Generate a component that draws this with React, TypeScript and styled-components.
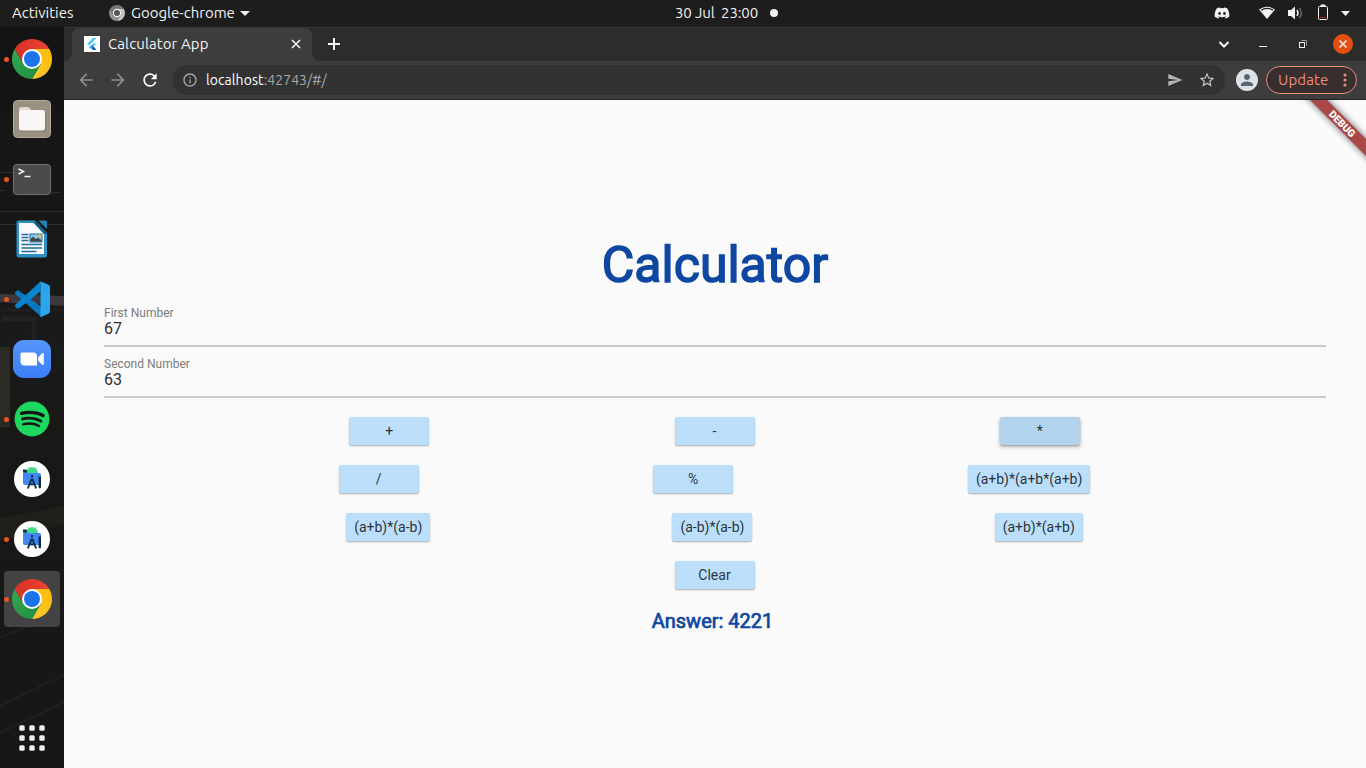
import React from "react";
import styled, { createGlobalStyle, css } from "styled-components";
import { FaDiscord, FaSpotify } from "react-icons/fa";
import { MdArrowBack, MdArrowForward, MdRefresh, MdInfoOutline, MdSend, MdStarBorder, MdPerson } from "react-icons/md";

const GlobalStyle = createGlobalStyle`
  * { box-sizing: border-box; }
  body { margin: 0; overflow: hidden; background: #161616; }
`;

const uiFont = `Ubuntu, "Noto Sans", "Open Sans", sans-serif`;
const appFont = `Roboto, "Liberation Sans", sans-serif`;

const Desktop = styled.div`
  width: 1366px;
  height: 768px;
  display: flex;
  flex-direction: column;
  font-family: ${uiFont};
`;

const TopBar = styled.header`
  height: 27px;
  flex: none;
  display: grid;
  grid-template-columns: 1fr auto 1fr;
  align-items: center;
  padding-bottom: 1px;
  background: #1d1d1d;
  color: #f2f2f2;
  font-size: 15px;
  line-height: 26px;
  white-space: pre;
`;

const BarLeft = styled.div`
  display: flex;
  align-items: center;
  padding-left: 12px;
`;

const Activities = styled.span`
  width: 97px;
`;

const AppMenu = styled.span`
  display: flex;
  align-items: center;
  gap: 6px;
`;

const Caret = styled.i`
  border: 5px solid transparent;
  border-top-color: #f2f2f2;
  border-bottom: 0;
  margin-left: -1px;
`;

const Clock = styled.div`
  display: flex;
  align-items: center;
  gap: 12px;
  padding-left: 87px;
  letter-spacing: -0.12px;
`;

const NoticeDot = styled.i`
  width: 8px;
  height: 8px;
  border-radius: 50%;
  background: #f2f2f2;
`;

const Tray = styled.div`
  display: flex;
  align-items: center;
  justify-content: flex-end;
  padding-right: 16px;
`;

const Workspace = styled.div`
  flex: 1;
  display: flex;
  min-height: 0;
`;

const Dock = styled.nav`
  position: relative;
  width: 64px;
  flex: none;
  display: flex;
  flex-direction: column;
  align-items: center;
  gap: 4px;
  padding: 4px 0;
  background: #151515;
`;

const Wallpaper = styled.svg`
  position: absolute;
  inset: 0;
`;

const DockItem = styled.div<{ $active?: boolean; $last?: boolean }>`
  position: relative;
  width: 56px;
  height: 56px;
  flex: none;
  display: flex;
  align-items: center;
  justify-content: center;
  border-radius: 4px;
  background: ${(p) => (p.$active ? "#434343" : "transparent")};
  ${(p) => p.$last && css`margin-top: auto; margin-bottom: -2px;`}
`;

const RunningDot = styled.i`
  position: absolute;
  left: 0;
  top: 25.500px;
  width: 5px;
  height: 5px;
  border-radius: 50%;
  background: #e95420;
`;

const Browser = styled.main`
  flex: 1;
  display: flex;
  flex-direction: column;
  min-width: 0;
`;

const TabStrip = styled.div`
  height: 34px;
  display: flex;
  align-items: stretch;
  padding-left: 8px;
  background: #2c2c2c;
  border-top: 1px solid #393939;
`;

const Tab = styled.div`
  position: relative;
  width: 240px;
  display: flex;
  align-items: center;
  padding: 0 10px 2px 12px;
  gap: 8px;
  background: #3d3d3d;
  border-radius: 8px 8px 0 0;
  color: #f4f4f4;
  font-size: 15px;
  letter-spacing: 0.1px;
  &::before, &::after {
    content: "";
    position: absolute;
    bottom: 0;
    width: 8px;
    height: 8px;
  }
  &::before { left: -8px; background: radial-gradient(circle at 0 0, transparent 7.5px, #3d3d3d 8px); }
  &::after { right: -8px; background: radial-gradient(circle at 100% 0, transparent 7.5px, #3d3d3d 8px); }
`;

const TabTitle = styled.span`
  flex: 1;
  line-height: 31px;
`;

const NewTab = styled.div`
  display: flex;
  align-items: center;
  padding: 0 0 2px 15px;
`;

const WindowControls = styled.div`
  margin-left: auto;
  display: flex;
  align-items: center;
  padding-bottom: 1px;
`;

const Toolbar = styled.div`
  height: 39px;
  display: flex;
  align-items: center;
  padding: 0 9px 1px 12px;
  background: #3d3d3d;
  border-bottom: 1px solid #222;
`;

const NavButtons = styled.div`
  display: flex;
  gap: 12px;
  width: 96px;
  padding-top: 1px;
  color: #8d8d8d;
`;

const AddressBar = styled.div`
  flex: 1;
  height: 30px;
  display: flex;
  align-items: center;
  border-radius: 15px;
  background: #323232;
  padding: 0 9px 0 10px;
  color: #a9a9a9;
  font-size: 14px;
  letter-spacing: 0.08px;
`;

const Url = styled.span`
  flex: 1;
  padding-left: 8px;
  line-height: 30px;
  b { color: #fff; font-weight: 400; }
`;

const BookmarkIcon = styled(MdStarBorder)`
  width: 18px;
  height: 18px;
  margin-left: 15px;
  color: #c5c5c5;
`;

const Avatar = styled.div`
  width: 22px;
  height: 22px;
  margin: 0 8px 0 11px;
  border-radius: 50%;
  display: flex;
  align-items: center;
  justify-content: center;
  background: #dee1e6;
  color: #5a6278;
`;

const UpdateButton = styled.div`
  width: 91px;
  height: 28px;
  display: flex;
  align-items: center;
  justify-content: space-between;
  padding: 0 9px 0 11px;
  border: 1px solid #f28b82;
  border-radius: 14px;
  background: #362f2e;
  color: #f28b82;
  font-size: 15px;
  letter-spacing: 0.15px;
`;

const Page = styled.section`
  position: relative;
  flex: 1;
  display: flex;
  flex-direction: column;
  padding: 136px 40px 0;
  background: #fafafa;
  font-family: ${appFont};
`;

const Title = styled.h1`
  margin: 0;
  height: 60px;
  line-height: 59px;
  text-align: center;
  font-size: 50px;
  font-weight: 400;
  color: #0d47a1;
  -webkit-text-stroke: 1.5px #0d47a1;
`;

const Field = styled.div`
  height: 51px;
  padding-top: 9px;
  border-bottom: 2px solid #cbcbcb;
`;

const FieldLabel = styled.div`
  height: 15px;
  line-height: 17px;
  font-size: 12px;
  color: #7c7c7c;
`;

const FieldValue = styled.div`
  line-height: 17px;
  font-size: 16px;
  color: #303030;
`;

const Keys = styled.div`
  display: flex;
  flex-direction: column;
  gap: 20px;
  padding: 19px 1px 0 0;
`;

const KeyRow = styled.div`
  display: flex;
  justify-content: space-evenly;
`;

const Key = styled.button<{ $hovered?: boolean }>`
  min-width: 80px;
  height: 28px;
  padding: 0 8px;
  border: 0;
  border-radius: 2px;
  background: ${(p) => (p.$hovered ? "#b3d4ef" : "#bbdefb")};
  box-shadow: ${(p) =>
    p.$hovered
      ? "0 2px 4px rgba(0,0,0,.25), 0 1px 2px rgba(0,0,0,.2)"
      : "0 1px 2px rgba(0,0,0,.22), 0 1px 1px rgba(0,0,0,.12)"};
  font: 400 14px/28px ${appFont};
  color: rgba(0, 0, 0, 0.8);
`;

const Answer = styled.div`
  margin: 20px 5px 0 0;
  text-align: center;
  font-size: 20px;
  line-height: 24px;
  color: #0d47a1;
  -webkit-text-stroke: 0.7px #0d47a1;
`;

const Ribbon = styled.svg`
  position: absolute;
  top: 0;
  right: 0;
`;

const ChromeIcon = ({ size = 40 }: { size?: number }) => (
  <svg width={size} height={size} viewBox="-20 -20 40 40">
    <defs>
      <linearGradient id="cr" x1="0" x2="1"><stop stopColor="#d93025" /><stop offset="1" stopColor="#ea4335" /></linearGradient>
      <linearGradient id="cy" x1="0" y1="1" x2="1" y2="0"><stop stopColor="#fcc934" /><stop offset="1" stopColor="#fbbc04" /></linearGradient>
      <linearGradient id="cg" x1="0" y1="0" x2="1" y2="1"><stop stopColor="#34a853" /><stop offset="1" stopColor="#1e8e3e" /></linearGradient>
    </defs>
    <path fill="url(#cr)" d="M-17.32-10A20 20 0 0 1 17.32-10H0L-8.66 5Z" />
    <path fill="url(#cy)" d="M17.32-10A20 20 0 0 1 0 20L8.66 5 0-10Z" />
    <path fill="url(#cg)" d="M0 20A20 20 0 0 1-17.32-10L-8.66 5H8.66Z" />
    <circle r="10" fill="#fff" />
    <circle r="8" fill="#1a73e8" />
  </svg>
);

const GrayChromeIcon = () => (
  <svg width="16" height="16" viewBox="-20 -20 40 40">
    <path fill="#777" d="M-17.32-10A20 20 0 0 1 17.32-10H0L-8.66 5Z" />
    <path fill="#c4c4c4" d="M17.32-10A20 20 0 0 1 0 20L8.66 5 0-10Z" />
    <path fill="#8f8f8f" d="M0 20A20 20 0 0 1-17.32-10L-8.66 5H8.66Z" />
    <circle r="9" fill="#555" stroke="#f2f2f2" strokeWidth="3" />
  </svg>
);

const FilesIcon = () => (
  <svg width="38" height="38" viewBox="0 0 38 38">
    <rect x=".5" y=".5" width="37" height="37" rx="4" fill="#999180" stroke="#b5ad9b" />
    <path d="M6 9.5Q6 7 8.500 7H14.500Q16.500 7 17.500 9L19 11H30V20H6Z" fill="#e2dbd0" />
    <rect x="6" y="10.500" width="27" height="21" rx="2.500" fill="#777064" opacity=".6" />
    <rect x="6" y="10" width="26" height="20.500" rx="2.500" fill="#f8f7f5" />
  </svg>
);

const TerminalIcon = () => (
  <svg width="38" height="31" viewBox="0 0 38 31">
    <rect x=".5" y=".5" width="37" height="30" rx="3" fill="#4b4b4b" stroke="#707070" />
    <path d="M5.500 5L10.500 7.500 5.500 10M11.500 12.500H17.500" fill="none" stroke="#f2f2f2" strokeWidth="1.500" />
  </svg>
);

const WriterIcon = () => (
  <svg width="32" height="38" viewBox="0 0 32 38">
    <path d="M3 .5H19L31 13V35Q31 37.500 28.500 37.500H3Q.5 37.500.5 35V3Q.5.5 3 .5Z" fill="#2f8fc4" />
    <path d="M3 3H18L28 14V34H3Z" fill="#f7f9fa" />
    <path d="M17 2L28 14 31 14 20 1Z" fill="#155a80" />
    <path d="M22.500.5H29.500Q31 .5 31 2V9Z" fill="#1c86ba" />
    <path d="M5.500 14.500H12.500M5.500 17.500H12.500M5.500 20.500H12.500M5.500 24.500H26M5.500 28H26M5.500 31.500H20.500" stroke="#1c6d9c" strokeWidth="1.600" />
    <rect x="14" y="14" width="12" height="8" fill="#91c9e5" stroke="#1c6d9c" />
    <path d="M14.500 21.500V19L17 16.500 20 19 22 17.500 25.500 20.500V21.500Z" fill="#444" />
    <circle cx="24" cy="15.500" r="1.500" fill="#f5b51b" />
  </svg>
);

const CodeIcon = () => (
  <svg width="36" height="36" viewBox="0 0 36 36">
    <path fill="#0a78c0" d="M1.300 13.100Q.3 12.200 1.300 11.200L3 9.700Q4 9 5 9.700L35 31.500 26 34.700Z" />
    <path fill="#0b84cf" d="M1.300 23.700Q.3 24.700 1.300 25.700L3 27.200Q4 28 5 27.200L26.500 10.500V1.200Q26 .9 25.300 1.400Z" />
    <path fill="#2ba5ee" d="M26 .8Q27 .4 28.200 1L34.700 4.100Q36 4.800 36 6.200V30.300Q36 31.700 34.700 32.400L28.200 35.500Q26.500 36.200 25.300 34.900 26.500 35.400 26.500 33.800V2.700Q26.500 1.200 25.300 1.400Z" />
  </svg>
);

const ZoomIcon = () => (
  <svg width="38" height="38" viewBox="0 0 38 38">
    <defs><linearGradient id="zm" x2="0" y2="1"><stop stopColor="#5697fb" /><stop offset="1" stopColor="#3a7df6" /></linearGradient></defs>
    <rect width="38" height="38" rx="11" fill="url(#zm)" />
    <path fill="#fff" d="M9 12.500H20Q24 12.500 24 16.500V25.500H11.500Q7.500 25.500 7.500 21.500V14Q7.500 12.500 9 12.500ZM25.200 17.400L29.200 13.300Q30.800 12.200 30.800 14V24Q30.800 25.800 29.200 24.700L25.200 20.700Z" />
  </svg>
);

const SpotifyIcon = styled(FaSpotify)`
  width: 36px;
  height: 36px;
  color: #1ed760;
  background: radial-gradient(circle, #151515 14px, transparent 15px);
`;

const StudioIcon = () => (
  <svg width="36" height="36" viewBox="0 0 36 36">
    <circle cx="18" cy="18" r="18" fill="#fff" />
    <path d="M12.500 12A5.500 5.500 0 0 1 23.500 12ZM13.500 6L15 8.500M22.500 6L21 8.500" fill="#3ddc84" stroke="#3ddc84" strokeWidth=".8" />
    <path d="M9 10H12.500L14 12H25.500Q27 12 27 13.500V22Q27 24 25 24H11Q9 24 9 22Z" fill="#4285f4" />
    <path d="M9 8.500H12Q13 8.500 13 10V11.500H11Q9 11.500 9 10Z" fill="#073042" />
    <path d="M18 14V17M18 17L13.800 27.500M18 17L22.200 27.500M14.800 22.500Q18 24.500 21.200 22.500" fill="none" stroke="#073042" strokeWidth="1.900" />
    <path d="M24.500 15.500H27V26.500Q26.500 27.500 25.500 27.500L24.500 26Z" fill="#073042" />
    <circle cx="18" cy="17" r=".9" fill="#4285f4" />
  </svg>
);

const AppsIcon = () => (
  <svg width="26" height="26" viewBox="0 0 26 26" fill="#eeeeec">
    {[0, 10, 20].map((y) => [0, 10, 20].map((x) => <rect key={`${x}-${y}`} x={x + 0.3} y={y + 0.3} width="5.400" height="5.400" rx="1.500" />))}
  </svg>
);

const FlutterIcon = () => (
  <svg width="16" height="16" viewBox="0 0 16 16">
    <path fill="#fff" d="M0 0h16v16H0z" />
    <path fill="#44c7fb" d="M9 2H12.500L5 9.500 3.200 7.800ZM9 7.400H12.500L8.600 11.200 6.800 9.400Z" />
    <path fill="#0b57a4" d="M6.800 11.200L8.600 9.400 12.500 14H9Z" />
    <path fill="#29a6ee" d="M5.100 11.200L6.900 9.400 8.700 11.200 6.900 13Z" />
  </svg>
);

const dockItems: { icon: React.ReactNode; running?: boolean; active?: boolean }[] = [
  { icon: <ChromeIcon />, running: true },
  { icon: <FilesIcon /> },
  { icon: <TerminalIcon />, running: true },
  { icon: <WriterIcon /> },
  { icon: <CodeIcon />, running: true },
  { icon: <ZoomIcon /> },
  { icon: <SpotifyIcon />, running: true },
  { icon: <StudioIcon /> },
  { icon: <StudioIcon />, running: true },
  { icon: <ChromeIcon />, running: true, active: true },
];

const keyRows = [
  ["+", "-", "*"],
  ["/", "%", "(a+b)*(a+b*(a+b)"],
  ["(a+b)*(a-b)", "(a-b)*(a-b)", "(a+b)*(a+b)"],
  ["Clear"],
];

const DockBackdrop = () => (
  <Wallpaper width="64" height="741">
    <defs>
      <linearGradient id="wall" x2="0" y2="1">
        <stop stopColor="#131313" />
        <stop offset=".25" stopColor="#171816" />
        <stop offset=".45" stopColor="#191a1b" />
        <stop offset=".52" stopColor="#191817" />
        <stop offset="1" stopColor="#181715" />
      </linearGradient>
    </defs>
    <rect width="64" height="741" fill="url(#wall)" />
    <path d="M0 145.500H14M0 163.500H6M52 165.500H60M0 184.500H64M0 197.500H64" stroke="#2d2c28" />
    <path d="M0 267L64 269V279L0 275Z" fill="#3b3840" />
    <path d="M0 281H64V285H0Z" fill="#1f1d20" />
    <path d="M0 320H10V400H0Z" fill="#2b2a25" />
    <path d="M2 292H34V346" fill="none" stroke="#202226" strokeWidth="5" />
    <path d="M0 491L64 479V497L0 515Z" fill="#201f1b" />
    <path d="M0 610L64 586M0 679L64 648M0 706L64 675" stroke="#292825" />
  </Wallpaper>
);

export default function App() {
  return (
    <Desktop>
      <GlobalStyle />
      <TopBar>
        <BarLeft>
          <Activities>Activities</Activities>
          <AppMenu>
            <GrayChromeIcon />
            Google-chrome
            <Caret />
          </AppMenu>
        </BarLeft>
        <Clock>
          30 Jul  23:00
          <NoticeDot />
        </Clock>
        <Tray>
          <FaDiscord size={16} />
          <svg width="120" height="20" viewBox="0 0 120 20">
            <path d="M29 6.500Q37 1 45 6.500L37 16Z" fill="#f2f2f2" />
            <path d="M31 7.200Q37 3.500 43 7.200" fill="none" stroke="#1d1d1d" strokeWidth="1.200" />
            <path d="M58 7H61L65 3.500V16.500L61 13H58Z" fill="#f2f2f2" />
            <path d="M67 7Q69 10 67 13" fill="none" stroke="#f2f2f2" strokeWidth="1.500" />
            <path d="M69.500 5Q73 10 69.500 15" fill="none" stroke="#777" strokeWidth="1.300" />
            <path d="M91 3V2H95V3" fill="#f2f2f2" stroke="#f2f2f2" />
            <rect x="88.500" y="3.500" width="9" height="13" rx="1" fill="none" stroke="#f2f2f2" />
            <path d="M90 14.500H96" stroke="#c01c1c" />
            <path d="M111 8H120L115.500 13Z" fill="#f2f2f2" />
          </svg>
        </Tray>
      </TopBar>
      <Workspace>
        <Dock>
          <DockBackdrop />
          {dockItems.map((item, i) => (
            <DockItem key={i} $active={item.active}>
              {item.running && <RunningDot />}
              {item.icon}
            </DockItem>
          ))}
          <DockItem $last>
            <AppsIcon />
          </DockItem>
        </Dock>
        <Browser>
          <TabStrip>
            <Tab>
              <FlutterIcon />
              <TabTitle>Calculator App</TabTitle>
              <svg width="12" height="12" viewBox="0 0 12 12"><path d="M2 2L10 10M10 2L2 10" stroke="#f4f4f4" strokeWidth="1.700" /></svg>
            </Tab>
            <NewTab>
              <svg width="14" height="14" viewBox="0 0 14 14"><path d="M7 1V13M1 7H13" stroke="#f4f4f4" strokeWidth="2" /></svg>
            </NewTab>
            <WindowControls>
              <svg width="150" height="32" viewBox="1216 28 150 32" fill="none" stroke="#f2f2f2">
                <path d="M1219.500 42L1224 46.500 1228.500 42" strokeWidth="2" />
                <path d="M1259 46.500H1267" />
                <path d="M1301.500 40.500H1306.500V45.500" stroke="#999" />
                <rect x="1299.500" y="42.500" width="5" height="5" />
                <circle cx="1343" cy="44" r="10" fill="#e2500f" stroke="none" />
                <path d="M1339.500 40.500L1346.500 47.500M1346.500 40.500L1339.500 47.500" strokeWidth="1.500" />
              </svg>
            </WindowControls>
          </TabStrip>
          <Toolbar>
            <NavButtons>
              <MdArrowBack size={20} />
              <MdArrowForward size={20} />
              <MdRefresh size={20} color="#fff" />
            </NavButtons>
            <AddressBar>
              <MdInfoOutline size={16} />
              <Url><b>localhost</b>:42743/#/</Url>
              <MdSend size={16} color="#b5b5b5" />
              <BookmarkIcon />
            </AddressBar>
            <Avatar><MdPerson size={18} /></Avatar>
            <UpdateButton>
              Update
              <svg width="4" height="14" viewBox="0 0 4 14" fill="#f28b82"><circle cx="2" cy="2" r="1.600" /><circle cx="2" cy="7" r="1.600" /><circle cx="2" cy="12" r="1.600" /></svg>
            </UpdateButton>
          </Toolbar>
          <Page>
            <Title>Calculator</Title>
            <Field>
              <FieldLabel>First Number</FieldLabel>
              <FieldValue>67</FieldValue>
            </Field>
            <Field>
              <FieldLabel>Second Number</FieldLabel>
              <FieldValue>63</FieldValue>
            </Field>
            <Keys>
              {keyRows.map((row) => (
                <KeyRow key={row[0]}>
                  {row.map((k) => (
                    <Key key={k} $hovered={k === "*"}>{k}</Key>
                  ))}
                </KeyRow>
              ))}
            </Keys>
            <Answer>Answer: 4221</Answer>
            <Ribbon width="70" height="70" viewBox="1296 100 70 70">
              <defs><filter id="soft" x="-50%" y="-150%" width="200%" height="400%"><feGaussianBlur stdDeviation="3.500" /></filter></defs>
              <g transform="translate(1342.300 123.700) rotate(45)">
                <rect x="-50" y="-6" width="100" height="12" fill="#000" opacity=".6" filter="url(#soft)" />
                <rect x="-50" y="-6" width="100" height="12" fill="#aa4848" />
                <text y="3.700" textAnchor="middle" fontFamily="Roboto, sans-serif" fontSize="10.200" fontWeight="900" fill="#fff">DEBUG</text>
              </g>
            </Ribbon>
          </Page>
        </Browser>
      </Workspace>
    </Desktop>
  );
}
